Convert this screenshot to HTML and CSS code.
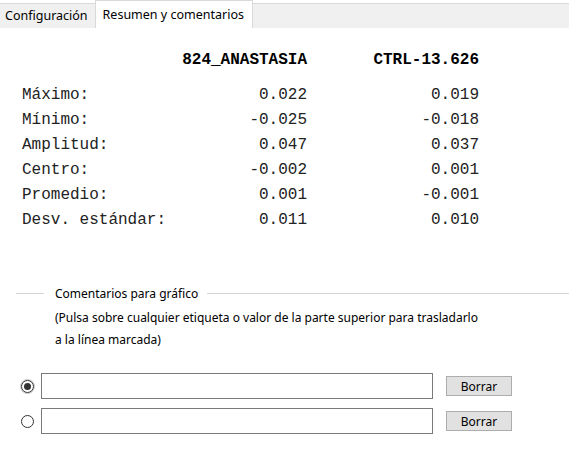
FILE: index.html
```html
<!DOCTYPE html>
<html lang="es">
<head>
    <meta charset="UTF-8">
    <meta name="viewport" content="width=device-width, initial-scale=1.0">
    <title>Resumen y comentarios</title>
    <link rel="stylesheet" href="styles.css">
</head>
<body>
    <div class="tabs">
        <div class="tab">Configuración</div>
        <div class="tab active">Resumen y comentarios</div>
        <div class="tab-rest"></div>
    </div>

    <div class="summary">
        <div class="cell head"></div>
        <div class="cell head num">824_ANASTASIA</div>
        <div class="cell head num">CTRL-13.626</div>

        <div class="cell">Máximo:</div>
        <div class="cell num">0.022</div>
        <div class="cell num">0.019</div>

        <div class="cell">Mínimo:</div>
        <div class="cell num">-0.025</div>
        <div class="cell num">-0.018</div>

        <div class="cell">Amplitud:</div>
        <div class="cell num">0.047</div>
        <div class="cell num">0.037</div>

        <div class="cell">Centro:</div>
        <div class="cell num">-0.002</div>
        <div class="cell num">0.001</div>

        <div class="cell">Promedio:</div>
        <div class="cell num">0.001</div>
        <div class="cell num">-0.001</div>

        <div class="cell">Desv. estándar:</div>
        <div class="cell num">0.011</div>
        <div class="cell num">0.010</div>
    </div>

    <div class="comments">
        <div class="group-title">
            <span class="line short"></span>
            <span class="title">Comentarios para gráfico</span>
            <span class="line"></span>
        </div>
        <p class="hint">(Pulsa sobre cualquier etiqueta o valor de la parte superior para trasladarlo<br>a la línea marcada)</p>

        <div class="comment-row">
            <input type="radio" name="linea" checked>
            <input type="text" class="comment-input">
            <button class="clear-btn">Borrar</button>
        </div>
        <div class="comment-row">
            <input type="radio" name="linea">
            <input type="text" class="comment-input">
            <button class="clear-btn">Borrar</button>
        </div>
    </div>
</body>
</html>
```

FILE: styles.css
```css
body {
    margin: 0;
    background-color: #fff;
    font-family: "Noto Sans", "Liberation Sans", Arial, sans-serif;
    font-size: 12px;
    color: #000;
}
.tabs {
    display: flex;
    height: 28px;
    align-items: flex-end;
    font-size: 12.5px;
}
.tab {
    height: 25px;
    line-height: 24px;
    padding: 0 7px 0 5px;
    background-color: #f0f0f0;
    border-top: 1px solid #d9d9d9;
    box-sizing: border-box;
}
.tab.active {
    height: 28px;
    line-height: 27px;
    padding: 0 8px 0 7px;
    background-color: #fff;
    border: 1px solid #d9d9d9;
    border-bottom: none;
}
.tab-rest {
    flex: 1;
    height: 25px;
    background-color: #f0f0f0;
    border-top: 1px solid #d9d9d9;
    box-sizing: border-box;
}
.summary {
    display: grid;
    grid-template-columns: 150px 135px 172px;
    grid-template-rows: 35px repeat(6, 25px);
    padding: 20px 0 0 22px;
    font-family: "Liberation Mono", "Courier New", monospace;
    font-size: 16px;
    color: #222;
}
.cell {
    line-height: 25px;
    white-space: nowrap;
}
.cell.head {
    font-weight: bold;
    color: #000;
}
.num {
    text-align: right;
}
.comments {
    margin-top: 52px;
}
.group-title {
    display: flex;
    align-items: center;
    height: 16px;
}
.line {
    flex: 1;
    height: 1px;
    background-color: #d5d5d5;
}
.line.short {
    flex: none;
    width: 28px;
    margin-left: 16px;
}
.title {
    padding: 0 9px 0 11px;
}
.hint {
    margin: 6px 0 0 55px;
    line-height: 22px;
}
.comment-row {
    display: flex;
    align-items: center;
    height: 26px;
    margin-top: 22px;
}
.comment-row + .comment-row {
    margin-top: 9px;
}
.comment-row input[type="radio"] {
    appearance: none;
    width: 13px;
    height: 13px;
    margin: 0 7px 0 21px;
    border: 1px solid #333;
    border-radius: 50%;
    box-sizing: border-box;
    position: relative;
}
.comment-row input[type="radio"]:checked {
    box-shadow: 0 0 0 1px #ccc;
}
.comment-row input[type="radio"]:checked::after {
    content: "";
    position: absolute;
    left: 2px;
    top: 2px;
    width: 7px;
    height: 7px;
    border-radius: 50%;
    background-color: #333;
}
.comment-input {
    width: 392px;
    height: 26px;
    margin: 0;
    padding: 0 4px;
    border: 1px solid #7a7a7a;
    box-sizing: border-box;
}
.clear-btn {
    width: 66px;
    height: 20px;
    margin-left: 13px;
    padding: 0;
    border: 1px solid #adadad;
    background-color: #e1e1e1;
    font-family: "Noto Sans", "Liberation Sans", Arial, sans-serif;
    font-size: 12px;
    color: #000;
}
```
